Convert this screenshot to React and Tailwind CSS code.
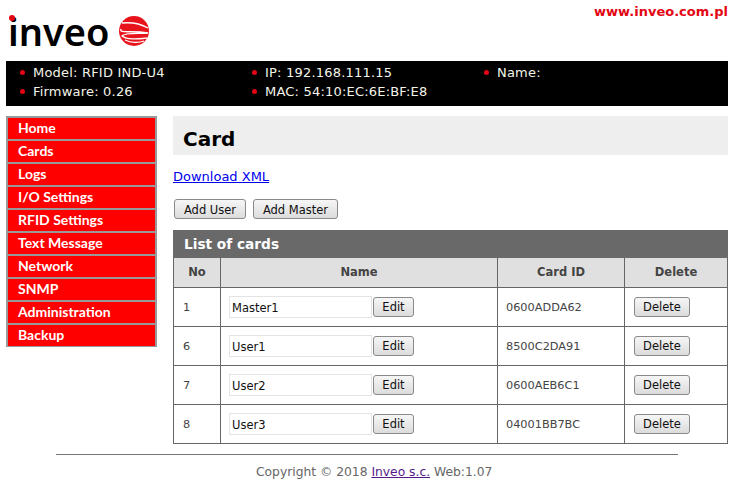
import React from "react";

const menu = [
  "Home",
  "Cards",
  "Logs",
  "I/O Settings",
  "RFID Settings",
  "Text Message",
  "Network",
  "SNMP",
  "Administration",
  "Backup",
];

const cards = [
  { no: 1, name: "Master1", id: "0600ADDA62" },
  { no: 6, name: "User1", id: "8500C2DA91" },
  { no: 7, name: "User2", id: "0600AEB6C1" },
  { no: 8, name: "User3", id: "04001BB7BC" },
];

function Btn({ children, className }) {
  return (
    <button
      className={`h-[20px] rounded-[3px] border border-[#8a8a8a] bg-gradient-to-b from-[#f6f6f6] to-[#dcdcdc] pt-[3px] text-[11.5px] leading-none text-[#111] ${className}`}
    >
      {children}
    </button>
  );
}

function Info({ children }) {
  return (
    <div className="flex h-[19px] items-center">
      <span className="ml-[14px] mr-[8px] h-[5px] w-[5px] rounded-full bg-[#e30613]"></span>
      <span>{children}</span>
    </div>
  );
}

function Logo() {
  return (
    <div className="relative flex items-center pl-[8px] pt-[9px]">
      <span className="absolute left-[9px] top-[15px] h-[6px] w-[6px] rounded-full bg-[#e30613]"></span>
      <span className="font-['Noto_Sans',sans-serif] text-[38px] font-semibold leading-[44px] text-black">
        inveo
      </span>
      <svg width="30" height="32" viewBox="0 0 30 32" className="ml-[10px] -mt-[1px]">
        <circle cx="15" cy="16" r="15" fill="#e8141c" />
        <path d="M3 8 C12 7 22 9 29 13" stroke="#fff" strokeWidth="1.4" fill="none" />
        <path d="M2 14 C0 19 12 15 29 18 C20 19 6 17 3 21 C8 25 18 24 28 23" stroke="#fff" strokeWidth="1.4" fill="none" />
        <path d="M6 25 C12 28 20 28 25 26" stroke="#fff" strokeWidth="1.2" fill="none" />
      </svg>
    </div>
  );
}

export default function App() {
  return (
    <div className="h-[483px] w-[739px] overflow-hidden bg-white font-['DejaVu_Sans',sans-serif] text-[12px]">
      <div className="flex h-[61px] items-start justify-between pr-[11px]">
        <Logo />
        <a className="mt-[2px] text-[13px] font-bold text-[#e30613]">www.inveo.com.pl</a>
      </div>

      <div className="mx-[6px] flex h-[45px] w-[722px] bg-black pt-[2px] text-[13px] tracking-[0.2px] text-[#f4f4e8]">
        <div className="w-[232px]">
          <Info>Model: RFID IND-U4</Info>
          <Info>Firmware: 0.26</Info>
        </div>
        <div className="w-[232px]">
          <Info>IP: 192.168.111.15</Info>
          <Info>MAC: 54:10:EC:6E:BF:E8</Info>
        </div>
        <div>
          <Info>Name:</Info>
        </div>
      </div>

      <div className="mt-[10px] flex pl-[6px]">
        <div className="h-[231px] w-[151px] border-2 border-[#999] bg-[#999]">
          {menu.map((item, index) => (
            <div
              key={item}
              className={`flex h-[21px] items-center bg-[#ff0000] pb-[2px] pl-[10px] font-['Lato',sans-serif] text-[14px] font-bold text-white ${index > 0 ? "mt-[2px]" : ""}`}
            >
              {item}
            </div>
          ))}
        </div>

        <div className="ml-[16px] w-[555px]">
          <div className="flex h-[39px] items-center bg-[#eeeeee] pl-[10px] pt-[7px] text-[20px] font-bold text-black">
            Card
          </div>
          <div className="mt-[13px] h-[18px] text-[13px] leading-[18px]">
            <a className="text-[#0000ee] underline">Download XML</a>
          </div>
          <div className="mt-[13px] flex gap-[7px] pl-[1px]">
            <Btn className="w-[72px]">Add User</Btn>
            <Btn className="w-[85px]">Add Master</Btn>
          </div>
          <div className="mt-[11px] flex h-[28px] items-center bg-[#696969] pl-[11px] text-[13.7px] font-bold text-white">
            List of cards
          </div>
          <table className="w-[555px] table-fixed border-collapse text-[11.3px] text-[#444]">
            <thead>
              <tr className="h-[29px] bg-[#e0e0e0] text-[11.5px] font-bold text-[#444]">
                <th className="w-[47px] border border-t-0 border-[#666]">No</th>
                <th className="w-[277px] border border-t-0 border-[#666]">Name</th>
                <th className="w-[127px] border border-t-0 border-[#666]">Card ID</th>
                <th className="border border-t-0 border-[#666]">Delete</th>
              </tr>
            </thead>
            <tbody>
              {cards.map((card) => (
                <tr key={card.no} className="h-[39px]">
                  <td className="border border-[#666] pl-[9px] pt-[3px]">{card.no}</td>
                  <td className="border border-[#666] pl-[8px]">
                    <div className="flex items-center">
                      <input
                        readOnly
                        value={card.name}
                        className="h-[22px] w-[143px] border border-[#e4e4e4] px-[2px] pt-[2px] font-['DejaVu_Sans',sans-serif] text-[11.5px] text-[#111] outline-none"
                      />
                      <Btn className="ml-[1px] w-[41px]">Edit</Btn>
                    </div>
                  </td>
                  <td className="border border-[#666] pl-[8px] pt-[3px]">{card.id}</td>
                  <td className="border border-[#666] pl-[9px]">
                    <Btn className="block w-[56px]">Delete</Btn>
                  </td>
                </tr>
              ))}
            </tbody>
          </table>
        </div>
      </div>

      <div className="ml-[56px] mt-[10px] w-[622px] border-t border-[#777]"></div>
      <div className="mt-[9px] pl-[256px] text-[12.3px] leading-[16px] text-[#666]">
        Copyright © 2018 <a className="text-[#551a8b] underline">Inveo s.c.</a> Web:1.07
      </div>
    </div>
  );
}
